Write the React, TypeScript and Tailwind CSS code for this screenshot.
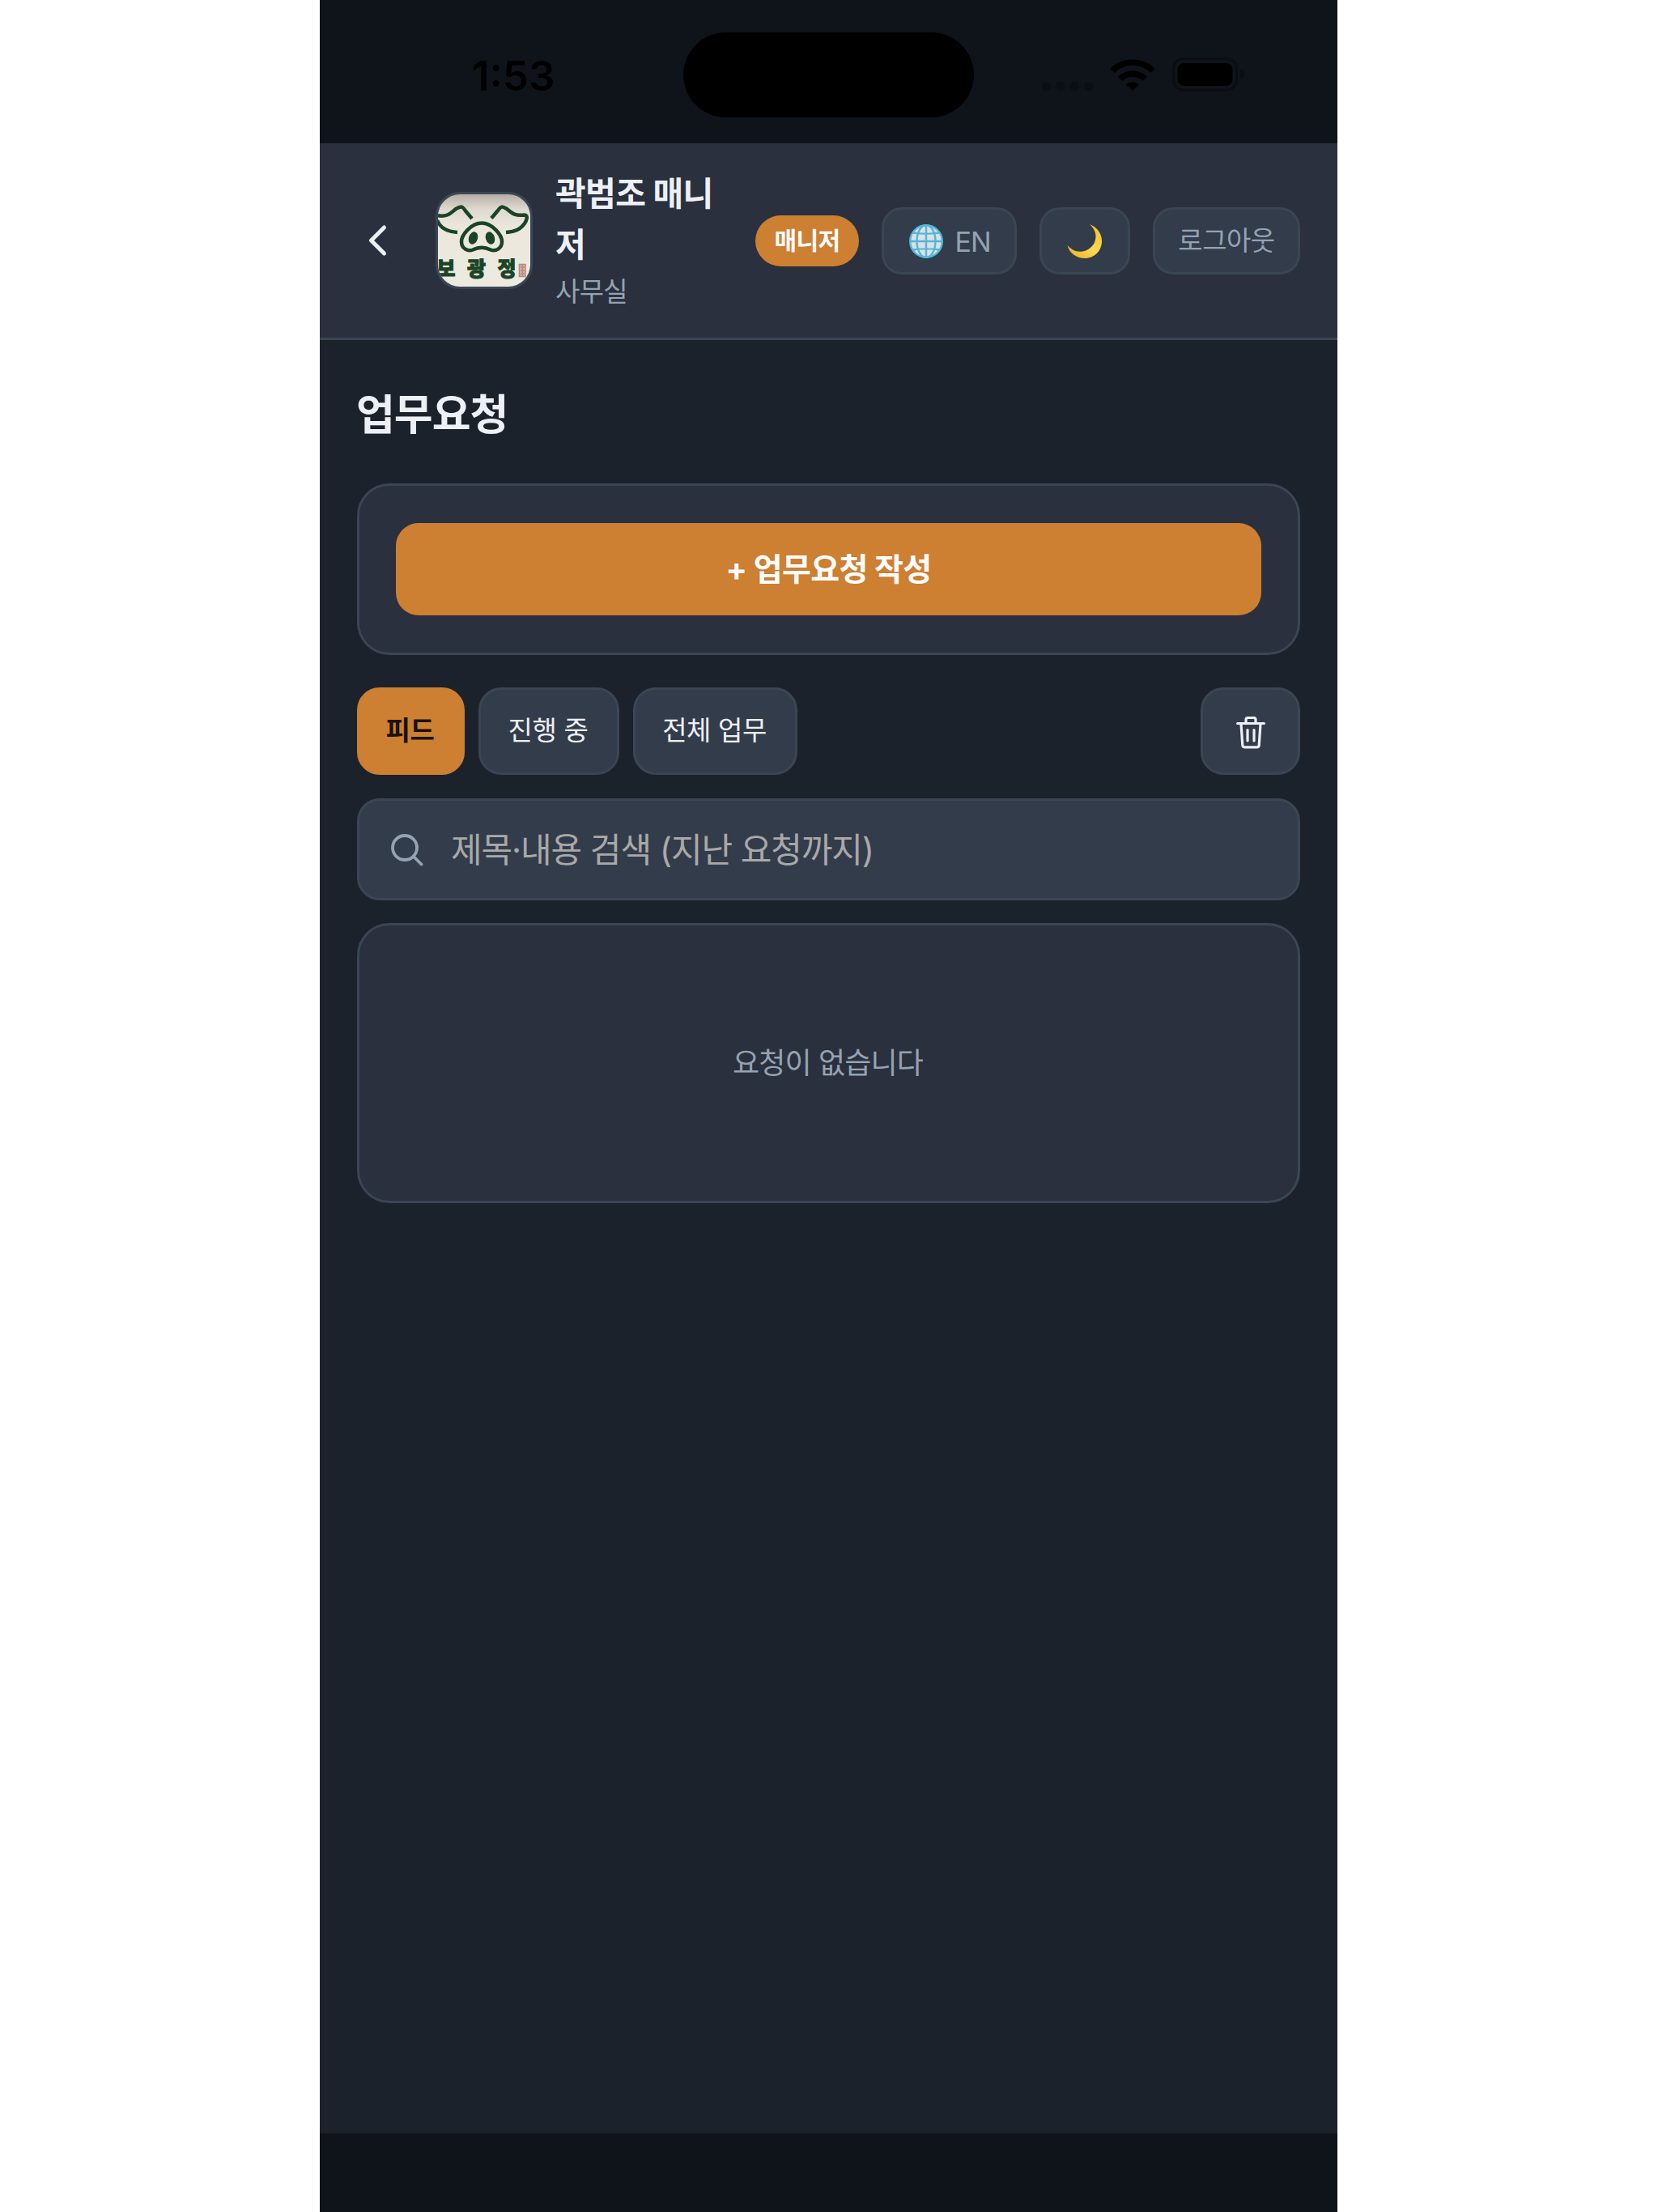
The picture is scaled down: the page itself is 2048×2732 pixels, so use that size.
import React, { useState } from 'react';

const tabs = [
  { id: 'feed', name: '피드', width: 'w-[133px]' },
  { id: 'progress', name: '진행 중', width: 'w-[174px]' },
  { id: 'all', name: '전체 업무', width: 'w-[203px]' },
];

const StatusBar = () => (
  <div className="relative h-[177px] bg-[#0f141b]">
    <div className="flex h-full items-center justify-between pl-[188px] pr-[114px] pt-[7px]">
      <span className="pt-0.5 font-[Inter] text-[51px] leading-none font-semibold text-black">1:53</span>
      <div className="flex items-center">
        <svg width="64" height="42" viewBox="0 0 64 42" fill="#0b0f15">
          <rect x="0" y="30" width="11" height="11" rx="4.5" />
          <rect x="17.4" y="30" width="11" height="11" rx="4.5" />
          <rect x="34.8" y="30" width="11" height="11" rx="4.5" />
          <rect x="52.2" y="30" width="11" height="11" rx="4.5" />
        </svg>
        <svg className="ml-5" width="56" height="42" viewBox="0 0 56 42">
          <path d="M0.5 13.5a39 39 0 0 1 55 0l-5 5.5a32 32 0 0 0-45 0z" />
          <path d="M10 23.5a26 26 0 0 1 36 0l-5.5 5.5a18 18 0 0 0-25 0z" />
          <path d="M20 33.2a12 12 0 0 1 16 0l-8 8z" />
        </svg>
        <svg className="ml-[21px]" width="90" height="42" viewBox="0 0 90 42">
          <rect x="1.5" y="1.5" width="78" height="38.5" rx="12" fill="none" stroke="#0a0d11" strokeWidth="3" />
          <rect x="6.5" y="7" width="68" height="28" rx="8" />
          <path d="M84 14.5c6.5 2 6.5 11 0 13z" fill="#0a0d11" />
        </svg>
      </div>
    </div>
    {/* Dynamic island */}
    <div className="absolute left-[449px] top-10 h-[105px] w-[359px] rounded-[54px] bg-black" />
  </div>
);

const Logo = () => (
  <svg width="114" height="114" viewBox="0 0 114 114">
    <defs>
      <linearGradient id="paper" x1="0" y1="0" x2="0" y2="1">
        <stop offset="0" stopColor="#b5aea5" />
        <stop offset="0.16" stopColor="#dfdad1" />
        <stop offset="0.35" stopColor="#ebe7dd" />
        <stop offset="1" stopColor="#edeae0" />
      </linearGradient>
    </defs>
    <rect width="114" height="114" fill="url(#paper)" />
    <g fill="none" stroke="#1a4426" strokeWidth="4.5" strokeLinejoin="round">
      <path d="M-2 26C14 29 17 21 23 17.5C29 14.5 30 14.5 34 20.5L42 30" />
      <path d="M-1 32C2 40 10 46 24 47" />
      <path d="M66 29.5L74 20C78 14.5 79 14.5 85 18C92 24 96 27 107 25.5C112 26 109 33 107 36C102 43 96 46 84 47" />
      <path d="M54 35.5C67 35.5 79 50 79 58.5C79 67 71 71 65 68.5C58 65 50 65 43 68.5C37 71 29 67 29 58.5C29 50 41 35.5 54 35.5Z" />
    </g>
    <g fill="#1a4426">
      <ellipse cx="43.5" cy="54" rx="5.5" ry="8" transform="rotate(18 43.5 54)" />
      <ellipse cx="64.5" cy="54" rx="5.5" ry="8" transform="rotate(-18 64.5 54)" />
      <g className="font-['Noto_Sans_CJK_KR',sans-serif] font-black" fontSize="25" stroke="#1a4426" strokeWidth="1">
        <text x="-1.5" y="100.5">보</text>
        <text x="36" y="100.5">광</text>
        <text x="73.5" y="100.5">정</text>
      </g>
    </g>
    <g fill="none" stroke="#b98c80" strokeWidth="1.6">
      <rect x="100.5" y="86.5" width="7.5" height="15" fill="#d3b5aa" />
      <path d="M102 90h5M102 94h5M102 98h5M104.3 87v14" />
    </g>
  </svg>
);

const Globe = () => (
  <svg width="42" height="42" viewBox="0 0 42 42">
    <circle cx="21" cy="21" r="20" fill="#dde0e4" />
    <g fill="none" stroke="#52b7db" strokeWidth="2.4">
      <circle cx="21" cy="21" r="19.8" />
      <ellipse cx="21" cy="21" rx="11.5" ry="20" />
      <path d="M21 1v40M1 21h40M4.5 10.5c9 1.5 24 1.5 33 0M4.5 31.5c9-1.5 24-1.5 33 0" />
    </g>
  </svg>
);

const Moon = () => (
  <svg width="44" height="44" viewBox="0 0 44 44">
    <defs>
      <linearGradient id="moon" x1="1" y1="0.2" x2="0.3" y2="1">
        <stop offset="0" stopColor="#f3c535" />
        <stop offset="0.55" stopColor="#fbd94f" />
        <stop offset="1" stopColor="#efb92e" />
      </linearGradient>
    </defs>
    <path d="M28 1C38 5 43 13 43 22C43 34 33.5 43 22 43C12 43 3 37 0.5 27C6 33 12 35.5 19 34.5C29 33 35.5 25 35.5 16C35.5 10 32.5 5 28 1Z" fill="url(#moon)" />
  </svg>
);

const Header = () => (
  <header className="flex h-[243px] items-center border-b-3 border-[#3a4654] bg-[#2a303d] pl-[60px] pr-[46px]">
    <button aria-label="뒤로">
      <svg width="23" height="38" viewBox="0 0 23 38" fill="none" stroke="#edf0f6" strokeWidth="5" strokeLinecap="round" strokeLinejoin="round">
        <path d="M19.5 3L3.5 19L19.5 35" />
      </svg>
    </button>
    <div className="ml-[60px] h-[120px] w-[120px] shrink-0 overflow-hidden rounded-[30px] border-3 border-[#3a4654]">
      <Logo />
    </div>
    <div className="ml-[28px] w-[219px] shrink-0">
      <h1 className="w-[210px] text-[41px] leading-[63px] font-bold tracking-[-0.6px] break-all text-[#edf0f6]">곽범조 매니저</h1>
      <p className="text-[33px] leading-[52px] tracking-[-0.7px] text-[#94a3b3]">사무실</p>
    </div>
    <div className="ml-auto flex items-center gap-[28px]">
      <span className="flex h-[63px] w-[128px] items-center justify-center rounded-full bg-[#cd7f32] text-[30px] font-bold tracking-[-0.6px] text-white">매니저</span>
      <button className="flex h-[83px] w-[167px] items-center justify-center gap-3.5 rounded-[25px] border-3 border-[#3a4654] bg-[#333c4a] pt-0.5 pl-0.5 text-[#94a3b3]">
        <Globe />
        <span className="text-[34px] tracking-[-1px]">EN</span>
      </button>
      <button className="flex h-[83px] w-[112px] items-center justify-center rounded-[25px] border-3 border-[#3a4654] bg-[#333c4a] pt-0.5">
        <Moon />
      </button>
      <button className="flex h-[83px] w-[182px] items-center justify-center rounded-[25px] border-3 border-[#3a4654] bg-[#333c4a] pt-0.5 text-[33px] tracking-[-0.5px] text-[#94a3b3]">로그아웃</button>
    </div>
  </header>
);

const App = () => {
  const [selectedTab, setSelectedTab] = useState('feed');

  return (
    <div className="h-[2732px] overflow-hidden bg-white font-[Inter,'Noto_Sans_CJK_KR',sans-serif]">
      <div className="ml-[395px] flex h-full w-[1257px] flex-col bg-[#1c222b]">
        <StatusBar />
        <Header />

        <main className="flex flex-1 flex-col px-[46px] pt-[55px]">
          <h2 className="-ml-px text-[52px] leading-[76px] font-bold tracking-[-1px] text-[#edf0f6]">업무요청</h2>

          {/* New request */}
          <section className="mt-[46px] rounded-[40px] border-3 border-[#3a4654] bg-[#2a303d] px-[45px] py-[46px]">
            <button className="h-[114px] w-full rounded-[28px] bg-[#cd7f32] text-[39px] font-bold tracking-[-0.7px] text-white">+ 업무요청 작성</button>
          </section>

          {/* Tabs */}
          <div className="mt-[40px] flex gap-[17px]">
            {tabs.map((tab) => (
              <button
                key={tab.id}
                onClick={() => setSelectedTab(tab.id)}
                className={`h-[108px] rounded-[28px] border-3 pr-0.5 text-[33px] tracking-[-0.4px] ${tab.width} ${
                  selectedTab === tab.id
                    ? 'border-[#cd7f32] bg-[#cd7f32] font-bold text-[#1a1206]'
                    : 'border-[#3a4654] bg-[#333c4a] text-[#edf0f6]'
                }`}
              >
                {tab.name}
              </button>
            ))}
            <button aria-label="휴지통" className="ml-auto flex h-[108px] w-[123px] items-center justify-center rounded-[28px] border-3 border-[#3a4654] bg-[#333c4a]">
              <svg className="mt-1" width="36" height="40" viewBox="0 0 36 40" fill="none" stroke="#edf0f6" strokeWidth="3.2" strokeLinecap="round" strokeLinejoin="round">
                <path d="M1.6 8.5h32.8M12 8V4a2.5 2.5 0 0 1 2.5-2.5h7A2.5 2.5 0 0 1 24 4v4M6 9l1.8 26.5a2.5 2.5 0 0 0 2.5 2.3h15.4a2.5 2.5 0 0 0 2.5-2.3L30 9M14 16.5v13.5M22 16.5v13.5" />
              </svg>
            </button>
          </div>

          {/* Search */}
          <label className="mt-[29px] flex h-[126px] items-center rounded-[28px] border-3 border-[#3a4654] bg-[#333c4a] pl-[39px]">
            <svg className="mt-0.5" width="40" height="40" viewBox="0 0 40 40" fill="none" stroke="#94a3b3" strokeWidth="3.8" strokeLinecap="round">
              <circle cx="17" cy="17" r="15" />
              <path d="M28 28l9.5 9.5" />
            </svg>
            <input className="ml-[34px] flex-1 bg-transparent text-[42px] tracking-[-1.1px] outline-none placeholder:text-[#a9a9a9]" placeholder="제목·내용 검색 (지난 요청까지)" />
          </label>

          {/* Empty list */}
          <section className="mt-[28px] flex h-[346px] items-center justify-center rounded-[40px] border-3 border-[#3a4654] bg-[#2a303d]">
            <p className="pr-0.5 text-[36px] tracking-[-0.9px] text-[#94a3b3]">요청이 없습니다</p>
          </section>
        </main>

        <div className="h-[97px] bg-[#0f141b]" />
      </div>
    </div>
  );
};

export default App;
